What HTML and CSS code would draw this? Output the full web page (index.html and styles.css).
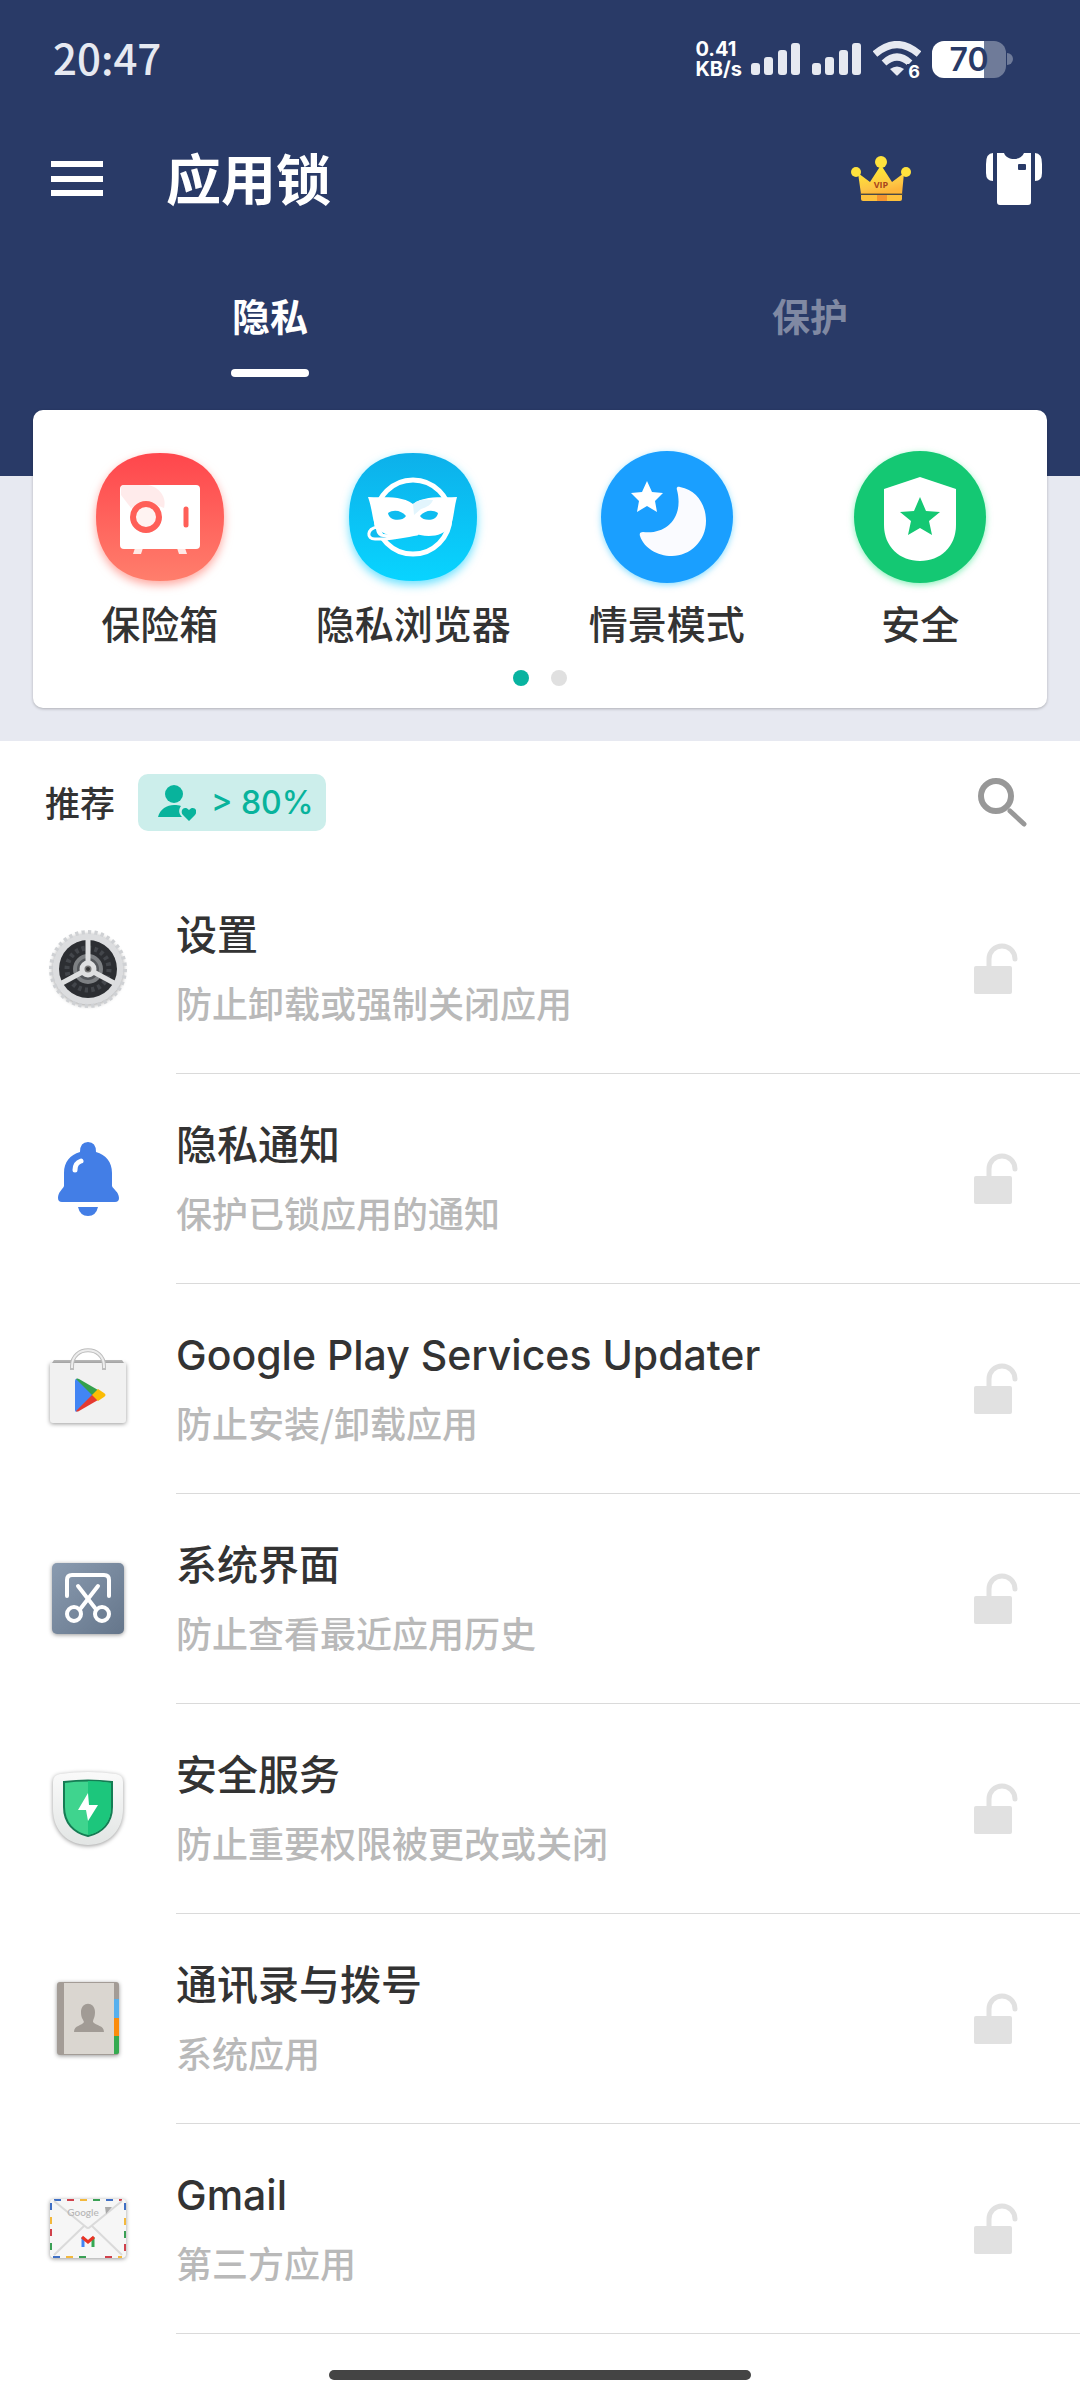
FILE: index.html
```html
<!DOCTYPE html>
<html lang="zh-CN">
<head>
    <meta charset="UTF-8">
    <meta name="viewport" content="width=device-width, initial-scale=1.0">
    <title>应用锁</title>
    <link rel="stylesheet" href="styles.css">
</head>
<body>
    <svg class="defs" aria-hidden="true">
        <symbol id="lock-open" viewBox="0 0 44 52">
            <path d="M15 24V16a13 13 0 0 1 26 0" fill="none" stroke="#e1e1e1" stroke-width="5" stroke-linecap="round"/>
            <rect x="0" y="23" width="38" height="28" rx="2" fill="#e1e1e1"/>
        </symbol>
        <symbol id="signal" viewBox="0 0 50 32">
            <g fill="#e6e9f1">
                <rect x="0" y="20" width="9" height="12" rx="3"/>
                <rect x="13" y="14" width="9" height="18" rx="3"/>
                <rect x="27" y="7" width="9" height="25" rx="3"/>
                <rect x="40" y="0" width="9" height="32" rx="3"/>
            </g>
        </symbol>
    </svg>

    <header class="header">
        <div class="status-bar">
            <span class="clock">20:47</span>
            <div class="status-icons">
                <span class="speed"><span>0.41</span><span>KB/s</span></span>
                <svg class="signal"><use href="#signal"/></svg>
                <svg class="signal"><use href="#signal"/></svg>
                <span class="wifi">
                    <svg width="48" height="36" viewBox="0 0 48 36">
                        <g fill="none" stroke="#e6e9f1" stroke-width="7">
                            <path d="M2 13Q24 -6 46 13"/>
                            <path d="M11 22Q24 10 37 22"/>
                        </g>
                        <path d="M17 28Q24 23 31 28L25 34Q24 35 23 34Z" fill="#e6e9f1"/>
                    </svg>
                    <span class="wifi-gen">6</span>
                </span>
                <span class="battery"><span class="battery-level">70</span></span>
            </div>
        </div>

        <div class="app-bar">
            <button class="icon-button" aria-label="菜单">
                <svg width="52" height="36" viewBox="0 0 52 36" fill="#fff">
                    <rect y="0" width="52" height="6"/>
                    <rect y="15" width="52" height="6"/>
                    <rect y="29" width="52" height="6"/>
                </svg>
            </button>
            <h1 class="title">应用锁</h1>
            <button class="icon-button" aria-label="VIP">
                <svg width="60" height="46" viewBox="0 0 60 46">
                    <defs>
                        <linearGradient id="gold" x1="0" y1="0" x2="0.3" y2="1">
                            <stop offset="0.2" stop-color="#ffe835"/>
                            <stop offset="0.8" stop-color="#fdc545"/>
                            <stop offset="1" stop-color="#fdb53a"/>
                        </linearGradient>
                    </defs>
                    <path d="M7 17L19 26L30 9L41 26L53 17L51 38H10Z" fill="url(#gold)"/>
                    <path d="M10 39H51V43Q51 45 49 45H12Q10 45 10 43Z" fill="#fdc03c"/>
                    <path d="M26 39H36V45H26Z" fill="#f4942f"/>
                    <path d="M9 38H52" stroke="#6d5a2c"/>
                    <circle cx="30" cy="6" r="6" fill="#ffe23d"/>
                    <circle cx="5" cy="16" r="5" fill="#ffe23d"/>
                    <circle cx="55" cy="16" r="5" fill="#ffe23d"/>
                    <text x="30" y="32" class="vip">VIP</text>
                </svg>
            </button>
            <button class="icon-button skin" aria-label="主题">
                <svg width="56" height="54" viewBox="0 0 56 54">
                    <g fill="#fff">
                        <path d="M7 1V29Q0 29 0 21V12Q0 1 7 1Z"/>
                        <path d="M49 1V29Q56 29 56 21V12Q56 1 49 1Z"/>
                        <path d="M11 1H18C21 9 35 9 38 1H45V50Q45 53 42 53H14Q11 53 11 50Z"/>
                    </g>
                    <rect x="32" y="12" width="8" height="6" rx="1" fill="#293a67"/>
                </svg>
            </button>
        </div>

        <nav class="tabs">
            <button class="tab active">隐私</button>
            <button class="tab">保护</button>
        </nav>
    </header>

    <section class="hero">
        <div class="card">
            <div class="features">
                <button class="feature">
                    <svg class="feature-icon" viewBox="0 0 144 144">
                        <defs>
                            <linearGradient id="red" x2="0" y2="1">
                                <stop stop-color="#ff464c"/>
                                <stop offset="1" stop-color="#ff7e6c"/>
                            </linearGradient>
                        </defs>
                        <path class="glow-red" d="M72 8C112 8 136 32 136 72S112 136 72 136 8 112 8 72 32 8 72 8Z" fill="url(#red)"/>
                        <path d="M47 103H55L53 109H45ZM89 103H97L99 109H91Z" fill="#ffe9e6"/>
                        <rect x="32" y="40" width="80" height="64" rx="4" fill="#fff"/>
                        <path d="M36 40H60C72 42 79 53 76 63L58 56L43 63L33 50V43Q33 40 36 40Z" fill="#ffe3e3" opacity=".7"/>
                        <circle cx="58" cy="72" r="13" fill="#fff3f2" stroke="#ff5f58" stroke-width="6"/>
                        <path d="M98 64V80" stroke="#ff5f58" stroke-width="5" stroke-linecap="round"/>
                    </svg>
                    <span>保险箱</span>
                </button>
                <button class="feature">
                    <svg class="feature-icon" viewBox="0 0 144 144">
                        <defs>
                            <linearGradient id="cyan" x2="0" y2="1">
                                <stop stop-color="#0db0ea"/>
                                <stop offset="1" stop-color="#08d4ff"/>
                            </linearGradient>
                        </defs>
                        <path class="glow-cyan" d="M72 8C112 8 136 32 136 72S112 136 72 136 8 112 8 72 32 8 72 8Z" fill="url(#cyan)"/>
                        <circle cx="72" cy="72" r="37" fill="none" stroke="#fff" stroke-width="5"/>
                        <path d="M27 52C42 53 60 50 72 59C84 50 102 53 116 52C113 63 113 72 110 80C102 94 82 92 72 88C62 92 42 94 34 80C31 72 31 63 27 52Z" fill="#fff"/>
                        <path d="M47 68C53 64 61 66 65 71C61 77 48 76 47 68Z" fill="#0ebcf0"/>
                        <path d="M97 68C91 64 83 66 79 71C83 77 96 76 97 68Z" fill="#0ebcf0"/>
                        <path d="M72 59C78 54 85 54 92 55C90 60 86 62 80 64L73 70Z" fill="#e2f5fd"/>
                        <path d="M36 82C26 84 25 94 34 94C48 95 64 91 76 89C62 87 48 93 40 90C36 88 37 84 36 82Z" fill="#0ebcf0" stroke="#fff" stroke-width="3" stroke-linejoin="round"/>
                    </svg>
                    <span>隐私浏览器</span>
                </button>
                <button class="feature">
                    <svg class="feature-icon" viewBox="0 0 144 144">
                        <circle class="glow-blue" cx="72" cy="72" r="66" fill="#1a9fff"/>
                        <path d="M52 36L57 47L68 48L60 56L62 67L52 61L42 67L44 56L36 48L47 47Z" fill="#fff"/>
                        <path d="M85 42C102 45 111 60 111 76C111 96 95 111 77 111C62 111 49 103 45 91C44 88 46 87 48 87C72 90 89 72 82 45C81 42 83 41 85 42Z" fill="#fafbff"/>
                    </svg>
                    <span>情景模式</span>
                </button>
                <button class="feature">
                    <svg class="feature-icon" viewBox="0 0 144 144">
                        <circle class="glow-green" cx="72" cy="72" r="66" fill="#14c873"/>
                        <path d="M72 32L108 44V80C108 102 92 116 72 116S36 102 36 80V44Z" fill="#fff"/>
                        <path d="M72 52L78 66L92 67L81 76L84 90L72 83L60 90L63 76L52 67L66 66Z" fill="#14c873"/>
                    </svg>
                    <span>安全</span>
                </button>
            </div>
            <div class="dots">
                <span class="dot active"></span>
                <span class="dot"></span>
            </div>
        </div>
    </section>

    <main>
        <div class="list-header">
            <h2>推荐</h2>
            <span class="badge">
                <svg width="38" height="36" viewBox="0 0 38 36" fill="#08b39c">
                    <circle cx="16" cy="9" r="9"/>
                    <path d="M0 32C2 24 9 20 16 20C19 20 21 20 23 21C20 25 21 29 24 32Z"/>
                    <path d="M31 36L25 30C21 25 27 20 31 25C35 20 41 25 37 30Z"/>
                </svg>
                &gt; 80%
            </span>
            <button class="icon-button search" aria-label="搜索">
                <svg width="50" height="50" viewBox="0 0 50 50" fill="none" stroke="#989898">
                    <circle cx="18" cy="18" r="15" stroke-width="6"/>
                    <path d="M32 33L46 46" stroke-width="5" stroke-linecap="round"/>
                </svg>
            </button>
        </div>

        <ul class="app-list">
            <li class="app">
                <svg class="app-icon" viewBox="0 0 80 80">
                    <circle class="shadow" cx="40" cy="40" r="32" fill="none" stroke="#dcdddf" stroke-width="7"/>
                    <circle cx="40" cy="40" r="37" pathLength="72" fill="none" stroke="#cfd1d4" stroke-width="4" stroke-dasharray="1 1"/>
                    <circle cx="40" cy="40" r="29" fill="#2c2e32"/>
                    <circle cx="40" cy="40" r="21" pathLength="40" fill="none" stroke="#43464b" stroke-width="5" stroke-dasharray="1 1"/>
                    <circle cx="40" cy="40" r="13" fill="#55585c" stroke="#7e8184" stroke-width="4"/>
                    <path d="M40 40V10M40 40L14 54M40 40L66 54" stroke="#dedfe0" stroke-width="5"/>
                    <circle cx="40" cy="40" r="6" fill="#777" stroke="#dedfe0" stroke-width="5"/>
                    <circle cx="40" cy="40" r="2" fill="#333"/>
                </svg>
                <div class="app-body">
                    <div class="app-text">
                        <h3>设置</h3>
                        <p>防止卸载或强制关闭应用</p>
                    </div>
                    <button class="icon-button" aria-label="锁定 设置"><svg class="lock"><use href="#lock-open"/></svg></button>
                </div>
            </li>
            <li class="app">
                <svg class="app-icon" viewBox="0 0 80 80">
                    <g fill="#437ee6">
                        <path d="M32 13Q32 3 40 3T48 13C58 16 64 23 64 34V47C65 50 71 53 71 59Q71 63 67 63H14Q10 63 10 59C10 53 15 50 16 47V34C16 23 22 16 32 13Z"/>
                        <path d="M30 68H50Q48 77 40 77T30 68Z"/>
                    </g>
                    <path d="M27 31Q27 24 33 22" fill="none" stroke="#fff" stroke-width="5" stroke-linecap="round"/>
                </svg>
                <div class="app-body">
                    <div class="app-text">
                        <h3>隐私通知</h3>
                        <p>保护已锁应用的通知</p>
                    </div>
                    <button class="icon-button" aria-label="锁定 隐私通知"><svg class="lock"><use href="#lock-open"/></svg></button>
                </div>
            </li>
            <li class="app">
                <svg class="app-icon" viewBox="0 0 80 80">
                    <path d="M4 14L6 11H74L76 14Z" fill="#b9b9b9"/>
                    <path class="shadow" d="M2 14H78V71Q78 74 75 74H5Q2 74 2 71Z" fill="#f1f1f1"/>
                    <path d="M24 21V17C24 -4 56 -4 56 17V21" fill="none" stroke="#bdbdbd" stroke-width="4"/>
                    <path d="M24 19V17C24 -4 56 -4 56 17V19" fill="none" stroke="#ededed" stroke-width="2"/>
                    <path d="M27 32V61Q27 64 30 62L46 46L30 30Q27 29 27 32Z" fill="#4285f4"/>
                    <path d="M28 30Q29 29 31 30L50 41L45 47Z" fill="#34a04c"/>
                    <path d="M28 62Q29 63 31 62L50 51L45 45Z" fill="#e53a30"/>
                    <path d="M50 40L56 44Q59 46 56 48L50 52L44 46Z" fill="#fbbc05"/>
                </svg>
                <div class="app-body">
                    <div class="app-text">
                        <h3>Google Play Services Updater</h3>
                        <p>防止安装/卸载应用</p>
                    </div>
                    <button class="icon-button" aria-label="锁定 Google Play Services Updater"><svg class="lock"><use href="#lock-open"/></svg></button>
                </div>
            </li>
            <li class="app">
                <svg class="app-icon" viewBox="0 0 80 80">
                    <defs>
                        <linearGradient id="slate" x2="1" y2="1">
                            <stop stop-color="#8a9bb0"/>
                            <stop offset="1" stop-color="#65768b"/>
                        </linearGradient>
                    </defs>
                    <rect class="shadow" x="4" y="4" width="72" height="71" rx="5" fill="url(#slate)"/>
                    <g fill="none" stroke="#fff" stroke-width="4" stroke-linecap="round">
                        <path d="M19 37V21Q19 16 24 16H56Q61 16 61 21V37"/>
                        <path d="M30 27L47 49M50 27L33 49"/>
                        <circle cx="26" cy="55" r="7"/>
                        <circle cx="54" cy="55" r="7"/>
                    </g>
                </svg>
                <div class="app-body">
                    <div class="app-text">
                        <h3>系统界面</h3>
                        <p>防止查看最近应用历史</p>
                    </div>
                    <button class="icon-button" aria-label="锁定 系统界面"><svg class="lock"><use href="#lock-open"/></svg></button>
                </div>
            </li>
            <li class="app">
                <svg class="app-icon" viewBox="0 0 80 80">
                    <defs>
                        <linearGradient id="pale" x2="0" y2="1">
                            <stop stop-color="#fafafa"/>
                            <stop offset="1" stop-color="#e2e5e4"/>
                        </linearGradient>
                    </defs>
                    <path class="shadow" d="M12 5Q40 1 68 5Q75 6 75 13V40C75 62 60 76 40 76S5 62 5 40V13Q5 6 12 5Z" fill="url(#pale)"/>
                    <path d="M16 13Q40 10 64 13V38C64 54 54 64 40 67C26 64 16 54 16 38Z" fill="#3fd48e" stroke="#167c54" stroke-width="2"/>
                    <path d="M40 12Q52 12 63 14V38C63 54 53 63 40 66Z" fill="#1cc67c"/>
                    <path d="M40 24L30 41H38L40 52L50 36H41Z" fill="#fff"/>
                </svg>
                <div class="app-body">
                    <div class="app-text">
                        <h3>安全服务</h3>
                        <p>防止重要权限被更改或关闭</p>
                    </div>
                    <button class="icon-button" aria-label="锁定 安全服务"><svg class="lock"><use href="#lock-open"/></svg></button>
                </div>
            </li>
            <li class="app">
                <svg class="app-icon" viewBox="0 0 80 80">
                    <rect class="shadow" x="9" y="3" width="62" height="73" rx="3" fill="#a39c96"/>
                    <rect x="16" y="4" width="50" height="71" fill="#dad6d0"/>
                    <path d="M66 20H71V39H66Z" fill="#57b0ee"/>
                    <path d="M66 39H71V57H66Z" fill="#fb8c0c"/>
                    <path d="M66 57H71V73Q71 75 68 75H66Z" fill="#35ab50"/>
                    <path d="M33 33C33 22 47 22 47 33C47 39 45 40 45 43C48 47 56 46 56 53H26C26 46 34 47 36 43C35 40 33 39 33 33Z" fill="#a19b95"/>
                </svg>
                <div class="app-body">
                    <div class="app-text">
                        <h3>通讯录与拨号</h3>
                        <p>系统应用</p>
                    </div>
                    <button class="icon-button" aria-label="锁定 通讯录与拨号"><svg class="lock"><use href="#lock-open"/></svg></button>
                </div>
            </li>
            <li class="app">
                <svg class="app-icon" viewBox="0 0 80 80">
                    <rect class="shadow" x="2" y="10" width="76" height="59" rx="4" fill="#f6f6f6"/>
                    <g fill="none" stroke-width="2">
                        <path d="M6 11H74M5 68H74M3 14V66M77 14V66" stroke="#3f6fc4" stroke-dasharray="7 45"/>
                        <path d="M19 11H74M57 68H74M3 40V66M77 55V66" stroke="#d0414b" stroke-dasharray="7 45"/>
                        <path d="M32 11H74M18 68H74M3 28V66M77 29V66" stroke="#f3b83c" stroke-dasharray="7 45"/>
                        <path d="M45 11H74M31 68H74M3 54V66M77 42V66" stroke="#3aa055" stroke-dasharray="7 45"/>
                    </g>
                    <path d="M6 12L38 38Q40 40 42 38L74 12M6 66L36 37M74 66L44 37" fill="none" stroke="#dadada" stroke-width="2"/>
                    <text x="35" y="27" class="postmark">Google</text>
                    <path d="M57 18H64L58 25Z" fill="#aaa"/>
                    <g fill="none" stroke-width="3">
                        <path d="M35 58V48" stroke="#4285f4"/>
                        <path d="M45 58V48" stroke="#34a853"/>
                        <path d="M34 48L40 53L46 48" stroke="#ea3323"/>
                    </g>
                </svg>
                <div class="app-body">
                    <div class="app-text">
                        <h3>Gmail</h3>
                        <p>第三方应用</p>
                    </div>
                    <button class="icon-button" aria-label="锁定 Gmail"><svg class="lock"><use href="#lock-open"/></svg></button>
                </div>
            </li>
        </ul>
    </main>

    <footer class="nav-bar">
        <div class="home-handle"></div>
    </footer>
</body>
</html>
```
FILE: styles.css
```css
* {
    box-sizing: border-box;
}
body {
    margin: 0;
    min-height: 100vh;
    display: flex;
    flex-direction: column;
    font-family: "Noto Sans CJK SC", sans-serif;
    font-weight: 500;
    color: #333;
    background-color: #fff;
}
svg {
    display: block;
    flex: none;
}
h1, h2, h3, p {
    margin: 0;
    font-weight: 500;
}
button {
    padding: 0;
    border: none;
    background: none;
    font: inherit;
    color: inherit;
    cursor: pointer;
}
.defs {
    position: absolute;
    width: 0;
    height: 0;
}
.icon-button {
    display: flex;
}

/* header */
.header {
    color: #fff;
    background-color: #293a67;
    padding-bottom: 99px;
}
.status-bar {
    display: flex;
    justify-content: space-between;
    align-items: center;
    height: 118px;
    padding: 0 74px 0 53px;
}
.clock {
    padding-bottom: 6px;
    font-size: 42px;
    color: #e6e9f1;
}
.status-icons {
    display: flex;
    align-items: center;
    gap: 11px;
}
.speed {
    display: flex;
    flex-direction: column;
    margin-right: -2px;
    font-family: Inter, sans-serif;
    font-size: 20px;
    font-weight: 700;
    line-height: 20px;
}
.signal {
    width: 50px;
    height: 32px;
}
.wifi {
    position: relative;
}
.wifi-gen {
    position: absolute;
    right: 1px;
    bottom: -3px;
    padding-left: 1px;
    font-family: Inter, sans-serif;
    font-size: 18px;
    font-weight: 700;
    line-height: 16px;
    background-color: #293a67;
}
.battery {
    position: relative;
    width: 74px;
    height: 37px;
    border-radius: 12px;
    background: linear-gradient(to right, #fff 70%, #6f7b99 70%);
}
.battery::after {
    content: "";
    position: absolute;
    left: 75px;
    top: 12px;
    width: 6px;
    height: 12px;
    border-radius: 0 6px 6px 0;
    background-color: #6f7b99;
}
.battery-level {
    display: block;
    text-align: center;
    font-family: Inter, sans-serif;
    font-size: 32px;
    font-weight: 600;
    line-height: 37px;
    color: #293a67;
}
.app-bar {
    display: flex;
    align-items: center;
    height: 122px;
    padding: 0 38px 0 51px;
}
.title {
    flex: 1;
    margin-left: 63px;
    padding-bottom: 6px;
    font-size: 55px;
    font-weight: 700;
}
.skin {
    margin-left: 75px;
}
.vip {
    font-family: "Open Sans", sans-serif;
    font-size: 9px;
    font-weight: 700;
    fill: #a8431c;
    text-anchor: middle;
}
.tabs {
    display: flex;
    height: 137px;
}
.tab {
    flex: 1;
    display: flex;
    flex-direction: column;
    align-items: center;
    justify-content: flex-end;
    gap: 27px;
    font-size: 38px;
    font-weight: 700;
    color: #8089a3;
}
.tab::after {
    content: "";
    width: 78px;
    height: 8px;
    border-radius: 4px;
}
.tab.active {
    color: #fff;
}
.tab.active::after {
    background-color: #fff;
}

/* feature card */
.hero {
    padding: 0 33px 33px;
    background-color: #e7e9f1;
}
.card {
    position: relative;
    margin-top: -66px;
    padding: 35px 0 22px;
    border-radius: 10px;
    background-color: #fff;
    box-shadow: 0 1px 3px rgba(0, 0, 0, 0.25);
}
.features {
    display: grid;
    grid-template-columns: repeat(4, 1fr);
}
.feature {
    display: flex;
    flex-direction: column;
    align-items: center;
    gap: 5px;
    font-size: 39px;
    line-height: 56px;
}
.feature-icon {
    width: 144px;
    height: 144px;
    overflow: visible;
}
.glow-red {
    filter: drop-shadow(0 4px 5px rgba(255, 110, 96, 0.6));
}
.glow-cyan {
    filter: drop-shadow(0 4px 5px rgba(8, 205, 255, 0.6));
}
.glow-blue {
    filter: drop-shadow(0 2px 3px rgba(26, 190, 255, 0.5));
}
.glow-green {
    filter: drop-shadow(0 2px 3px rgba(20, 225, 120, 0.5));
}
.dots {
    display: flex;
    justify-content: center;
    gap: 22px;
    margin-top: 20px;
}
.dot {
    width: 16px;
    height: 16px;
    border-radius: 50%;
    background-color: #e0e0e0;
}
.dot.active {
    background-color: #08b3a0;
}

/* app list */
.list-header {
    display: flex;
    align-items: center;
    height: 123px;
    padding: 0 52px 0 45px;
}
.list-header h2 {
    padding-bottom: 3px;
    font-size: 35px;
}
.badge {
    display: flex;
    align-items: center;
    gap: 15px;
    height: 57px;
    margin-left: 23px;
    padding: 0 13px 0 20px;
    border-radius: 10px;
    font-family: Inter, sans-serif;
    font-size: 32px;
    color: #08b39c;
    background-color: #cceeeb;
}
.search {
    margin-left: auto;
}
.app-list {
    margin: 0;
    padding: 0;
    list-style: none;
}
.app {
    display: flex;
    align-items: center;
    gap: 48px;
    padding-left: 48px;
}
.app-icon {
    width: 80px;
    height: 80px;
    overflow: visible;
}
.shadow {
    filter: drop-shadow(0 1px 2px rgba(0, 0, 0, 0.4));
}
.app-body {
    flex: 1;
    display: flex;
    align-items: center;
    justify-content: space-between;
    height: 210px;
    padding-right: 62px;
    border-bottom: 1px solid #dadada;
}
.app-body h3 {
    font-family: Inter, "Noto Sans CJK SC", sans-serif;
    font-size: 41px;
    line-height: 66px;
}
.app-body p {
    font-size: 36px;
    line-height: 68px;
    color: #b9b9b9;
}
.lock {
    width: 44px;
    height: 52px;
}
.postmark {
    font-family: Lato, sans-serif;
    font-size: 10px;
    fill: #b5b5b5;
    text-anchor: middle;
}

.nav-bar {
    display: flex;
    justify-content: center;
    align-items: flex-end;
    flex: 1;
    padding: 20px 0;
}
.home-handle {
    width: 39%;
    height: 10px;
    border-radius: 5px;
    background-color: #444;
}
```
